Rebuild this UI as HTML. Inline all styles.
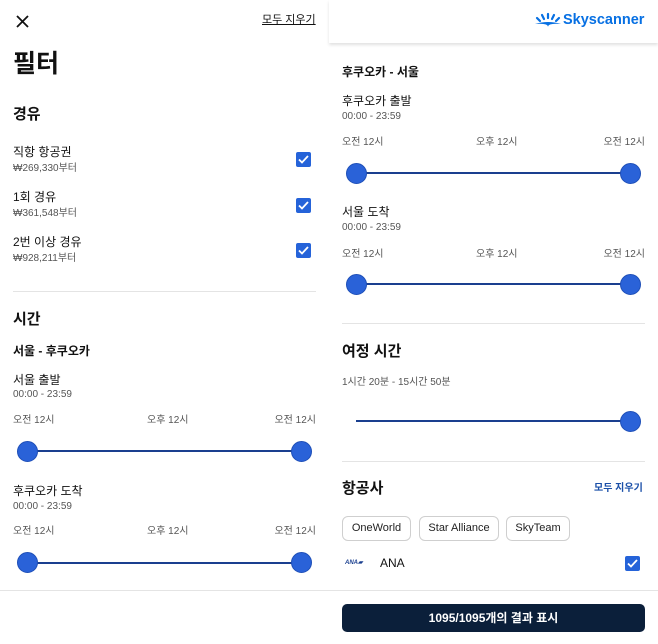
<!DOCTYPE html>
<html><head><meta charset="utf-8"><style>
*{margin:0;padding:0;box-sizing:border-box}
body{width:658px;height:644px;background:#fff;position:relative;overflow:hidden;font-family:"Liberation Sans","Noto Sans CJK KR",sans-serif;color:#111}
.t{position:absolute;white-space:nowrap;line-height:1}
.r{position:absolute;white-space:nowrap;line-height:1;text-align:right;width:80px}
.b{font-weight:700}
.g{color:#555}
.cb{position:absolute;width:15px;height:15px;background:#2563d9;border-radius:2px}
.cb svg{position:absolute;left:1px;top:1px}
.line{position:absolute;height:2px;background:#1a3f8f}
.dot{position:absolute;width:21px;height:21px;border-radius:50%;background:#2a62d8;border:1px solid #1e4fb8}
.hr{position:absolute;height:1px;background:#e4e4e4}
.pill{position:absolute;top:516px;height:25px;border:1px solid #cfcfcf;border-radius:6px;font-size:11px;line-height:23px;text-align:center;color:#222}
</style></head><body>
<!-- LEFT PANEL -->
<svg style="position:absolute;left:16px;top:15px" width="13" height="13" viewBox="0 0 13 13"><path d="M1 1L12 12M12 1L1 12" stroke="#111" stroke-width="1.8"/></svg>
<div class="t" style="left:262px;top:15px;font-size:11px;text-decoration:underline">모두 지우기</div>
<div class="t b" style="left:13px;top:52px;font-size:25px">필터</div>
<div class="t b" style="left:13px;top:107px;font-size:15px">경유</div>

<div class="t" style="left:13px;top:146px;font-size:12px">직항 항공권</div>
<div class="t g" style="left:13px;top:164px;font-size:10px">₩269,330부터</div>
<div class="cb" style="left:296px;top:152px"><svg width="13" height="13" viewBox="0 0 13 13"><path d="M2 6.5L5 9.5L11 3" stroke="#fff" stroke-width="1.8" fill="none"/></svg></div>
<div class="t" style="left:13px;top:191px;font-size:12px">1회 경유</div>
<div class="t g" style="left:13px;top:209px;font-size:10px">₩361,548부터</div>
<div class="cb" style="left:296px;top:198px"><svg width="13" height="13" viewBox="0 0 13 13"><path d="M2 6.5L5 9.5L11 3" stroke="#fff" stroke-width="1.8" fill="none"/></svg></div>
<div class="t" style="left:13px;top:236px;font-size:12px">2번 이상 경유</div>
<div class="t g" style="left:13px;top:254px;font-size:10px">₩928,211부터</div>
<div class="cb" style="left:296px;top:243px"><svg width="13" height="13" viewBox="0 0 13 13"><path d="M2 6.5L5 9.5L11 3" stroke="#fff" stroke-width="1.8" fill="none"/></svg></div>

<div class="hr" style="left:13px;width:303px;top:291px"></div>
<div class="t b" style="left:13px;top:312px;font-size:15px">시간</div>
<div class="t b" style="left:13px;top:345px;font-size:12px">서울 - 후쿠오카</div>
<div class="t" style="left:13px;top:374px;font-size:12px">서울 출발</div>
<div class="t g" style="left:13px;top:390px;font-size:10px">00:00 - 23:59</div>
<div class="t g" style="left:13px;top:416px;font-size:10px">오전 12시</div>
<div class="t g" style="left:147px;top:416px;font-size:10px">오후 12시</div>
<div class="r g" style="left:236px;top:416px;font-size:10px">오전 12시</div>
<div class="line" style="left:27px;width:274px;top:450px"></div>
<div class="dot" style="left:17px;top:441px"></div>
<div class="dot" style="left:291px;top:441px"></div>

<div class="t" style="left:13px;top:485px;font-size:12px">후쿠오카 도착</div>
<div class="t g" style="left:13px;top:502px;font-size:10px">00:00 - 23:59</div>
<div class="t g" style="left:13px;top:527px;font-size:10px">오전 12시</div>
<div class="t g" style="left:147px;top:527px;font-size:10px">오후 12시</div>
<div class="r g" style="left:236px;top:527px;font-size:10px">오전 12시</div>
<div class="line" style="left:27px;width:274px;top:562px"></div>
<div class="dot" style="left:17px;top:552px"></div>
<div class="dot" style="left:291px;top:552px"></div>
<div class="hr" style="left:0;width:329px;top:590px"></div>

<!-- RIGHT PANEL -->
<div style="position:absolute;left:329px;top:0;width:329px;height:43px;background:#fff;box-shadow:0 2px 3px rgba(0,0,0,0.12)"></div>
<svg style="position:absolute;left:533px;top:12px" width="30" height="16" viewBox="0 0 30 16"><g stroke="#0770e3" stroke-width="2.2" stroke-linecap="round"><path d="M15 2V6M9 3L11 7M21 3L19 7M4 6L7 9M26 6L23 9"/></g><path d="M2 12Q15 8 28 12Q15 11 15 15Q15 11 2 12Z" fill="#0770e3"/></svg>
<div class="t b" style="left:563px;top:13px;font-size:14.5px;color:#0770e3">Skyscanner</div>

<div class="t b" style="left:342px;top:66px;font-size:12px">후쿠오카 - 서울</div>
<div class="t" style="left:342px;top:95px;font-size:12px">후쿠오카 출발</div>
<div class="t g" style="left:342px;top:112px;font-size:10px">00:00 - 23:59</div>
<div class="t g" style="left:342px;top:138px;font-size:10px">오전 12시</div>
<div class="t g" style="left:476px;top:138px;font-size:10px">오후 12시</div>
<div class="r g" style="left:565px;top:138px;font-size:10px">오전 12시</div>
<div class="line" style="left:356px;width:274px;top:172px"></div>
<div class="dot" style="left:346px;top:163px"></div>
<div class="dot" style="left:620px;top:163px"></div>

<div class="t" style="left:342px;top:206px;font-size:12px">서울 도착</div>
<div class="t g" style="left:342px;top:223px;font-size:10px">00:00 - 23:59</div>
<div class="t g" style="left:342px;top:250px;font-size:10px">오전 12시</div>
<div class="t g" style="left:476px;top:250px;font-size:10px">오후 12시</div>
<div class="r g" style="left:565px;top:250px;font-size:10px">오전 12시</div>
<div class="line" style="left:356px;width:274px;top:283px"></div>
<div class="dot" style="left:346px;top:274px"></div>
<div class="dot" style="left:620px;top:274px"></div>

<div class="hr" style="left:342px;width:303px;top:323px"></div>
<div class="t b" style="left:342px;top:344px;font-size:15px">여정 시간</div>
<div class="t g" style="left:342px;top:378px;font-size:10px">1시간 20분 - 15시간 50분</div>
<div class="line" style="left:356px;width:274px;top:420px"></div>
<div class="dot" style="left:620px;top:411px"></div>

<div class="hr" style="left:342px;width:303px;top:461px"></div>
<div class="t b" style="left:342px;top:481px;font-size:15px">항공사</div>
<div class="t b" style="left:594px;top:484px;font-size:10px;color:#1a4fa8">모두 지우기</div>
<div class="pill" style="left:342px;width:69px">OneWorld</div>
<div class="pill" style="left:419px;width:80px">Star Alliance</div>
<div class="pill" style="left:506px;width:64px">SkyTeam</div>
<div class="t b" style="left:345px;top:560px;font-size:6px;color:#1a3f8f;font-style:italic">ANA▰</div>
<div class="t" style="left:380px;top:557px;font-size:12px">ANA</div>
<div class="cb" style="left:625px;top:556px"><svg width="13" height="13" viewBox="0 0 13 13"><path d="M2 6.5L5 9.5L11 3" stroke="#fff" stroke-width="1.8" fill="none"/></svg></div>
<div class="hr" style="left:329px;width:329px;top:590px"></div>
<div style="position:absolute;left:342px;top:604px;width:303px;height:28px;background:#0b1f3a;border-radius:5px;color:#fff;font-size:12px;font-weight:700;text-align:center;line-height:28px">1095/1095개의 결과 표시</div>
</body></html>
